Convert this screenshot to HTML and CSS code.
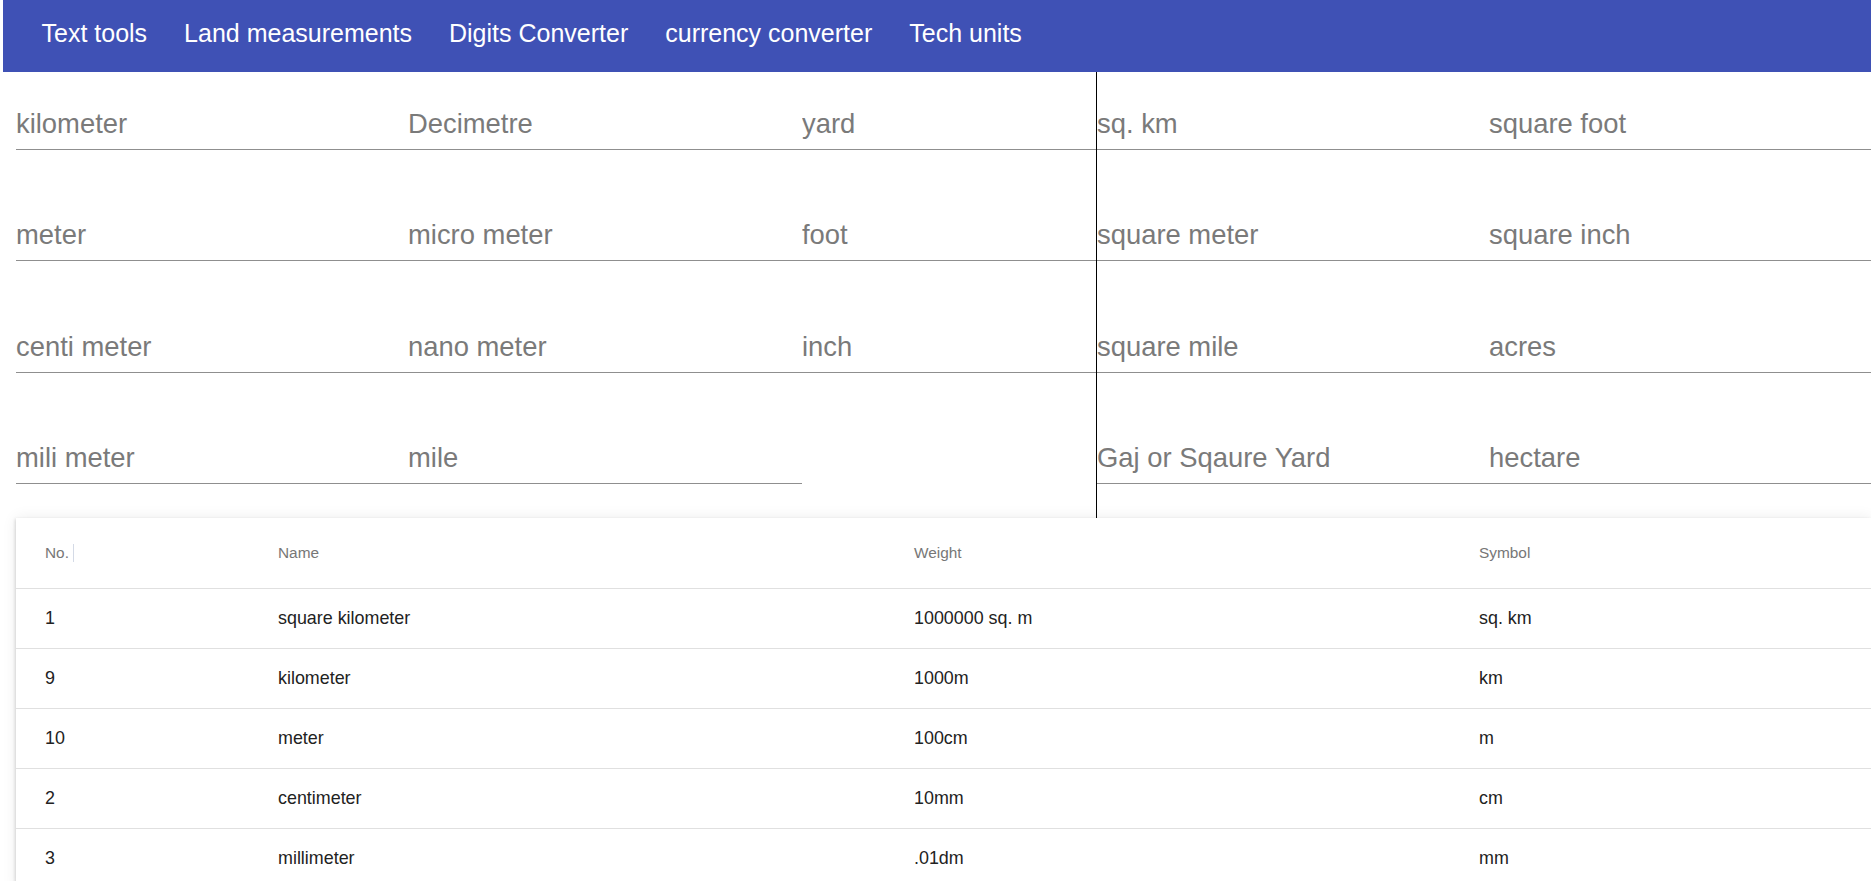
FILE: index.html
```html
<!DOCTYPE html>
<html lang="en">
<head>
<meta charset="utf-8">
<title>Unit converter</title>
<link rel="stylesheet" href="styles.css">
</head>
<body>
<header class="topbar">
  <nav class="nav">
    <a class="nav-link" href="#">Text tools</a>
    <a class="nav-link" href="#">Land measurements</a>
    <a class="nav-link" href="#">Digits Converter</a>
    <a class="nav-link" href="#">currency converter</a>
    <a class="nav-link" href="#">Tech units</a>
  </nav>
</header>
<main>
  <section class="converters">
    <div class="length-grid">
      <div class="cell"><input class="field" placeholder="kilometer"></div>
      <div class="cell"><input class="field" placeholder="Decimetre"></div>
      <div class="cell"><input class="field" placeholder="yard"></div>
      <div class="cell"><input class="field" placeholder="meter"></div>
      <div class="cell"><input class="field" placeholder="micro meter"></div>
      <div class="cell"><input class="field" placeholder="foot"></div>
      <div class="cell"><input class="field" placeholder="centi meter"></div>
      <div class="cell"><input class="field" placeholder="nano meter"></div>
      <div class="cell"><input class="field" placeholder="inch"></div>
      <div class="cell"><input class="field" placeholder="mili meter"></div>
      <div class="cell"><input class="field" placeholder="mile"></div>
      <div class="cell"></div>
    </div>
    <div class="area-grid">
      <div class="cell"><input class="field" placeholder="sq. km"></div>
      <div class="cell"><input class="field" placeholder="square foot"></div>
      <div class="cell"><input class="field" placeholder="square meter"></div>
      <div class="cell"><input class="field" placeholder="square inch"></div>
      <div class="cell"><input class="field" placeholder="square mile"></div>
      <div class="cell"><input class="field" placeholder="acres"></div>
      <div class="cell"><input class="field" placeholder="Gaj or Sqaure Yard"></div>
      <div class="cell"><input class="field" placeholder="hectare"></div>
    </div>
  </section>
  <div class="table-card">
    <table class="units">
      <colgroup>
        <col class="c-no"><col class="c-name"><col class="c-weight"><col class="c-symbol">
      </colgroup>
      <thead>
        <tr><th><span class="th-no">No.</span></th><th>Name</th><th>Weight</th><th>Symbol</th></tr>
      </thead>
      <tbody>
        <tr><td>1</td><td>square kilometer</td><td>1000000 sq. m</td><td>sq. km</td></tr>
        <tr><td>9</td><td>kilometer</td><td>1000m</td><td>km</td></tr>
        <tr><td>10</td><td>meter</td><td>100cm</td><td>m</td></tr>
        <tr><td>2</td><td>centimeter</td><td>10mm</td><td>cm</td></tr>
        <tr><td>3</td><td>millimeter</td><td>.01dm</td><td>mm</td></tr>
      </tbody>
    </table>
  </div>
</main>
</body>
</html>
```
FILE: styles.css
```css
html, body {
  margin: 0;
  padding: 0;
  background: #ffffff;
  font-family: "Liberation Sans", Arial, sans-serif;
  overflow: hidden;
}

.topbar {
  margin-left: 3px;
  height: 72px;
  background: #3f51b5;
  display: flex;
  align-items: center;
}

.nav {
  display: flex;
  padding-left: 20px;
  padding-bottom: 6px;
}

.nav-link {
  color: #ffffff;
  text-decoration: none;
  font-size: 25px;
  padding: 0 18.5px;
  line-height: 30px;
}

.converters {
  display: flex;
  height: 446px;
}

.length-grid {
  margin-left: 16px;
  width: 1080px;
  display: grid;
  grid-template-columns: 392px 394px 294px;
  grid-auto-rows: 111.33px;
}

.area-grid {
  flex: 1;
  border-left: 1px solid #000000;
  display: grid;
  grid-template-columns: 392px 1fr;
  grid-auto-rows: 111.33px;
}

.cell {
  padding-top: 33px;
}

.field {
  display: block;
  box-sizing: border-box;
  width: 100%;
  height: 45px;
  margin: 0;
  padding: 0 0 6px 0;
  border: none;
  border-bottom: 1px solid #8f8f8f;
  outline: none;
  background: transparent;
  font-family: "Liberation Sans", Arial, sans-serif;
  font-size: 27.4px;
  line-height: 38px;
  color: #333333;
}

.field::placeholder {
  color: #7a7a7a;
  opacity: 1;
}

.table-card {
  background: #ffffff;
  margin-left: 16px;
  box-shadow: 0 0 14px rgba(0, 0, 0, 0.08), -1px 1px 3px rgba(0, 0, 0, 0.14);
}

.units {
  width: 100%;
  border-collapse: collapse;
  table-layout: fixed;
}

.c-no { width: 233px; }
.c-name { width: 636px; }
.c-weight { width: 565px; }

.units th {
  height: 70px;
  padding: 0 0 0 29px;
  text-align: left;
  font-weight: normal;
  font-size: 15.4px;
  color: #777777;
  border-bottom: 1px solid #e0e0e0;
}

.th-no {
  display: inline-block;
  padding-right: 4px;
  border-right: 1px solid #d4dae6;
  line-height: 18px;
}

.units td {
  height: 59px;
  padding: 0 0 0 29px;
  font-size: 17.9px;
  color: #222222;
  border-bottom: 1px solid #e0e0e0;
}
```
